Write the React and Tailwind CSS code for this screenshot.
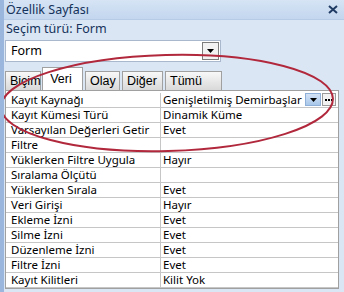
import React from "react";

const rows = [
  ["Kayıt Kaynağı", "Genişletilmiş Demirbaşlar"],
  ["Kayıt Kümesi Türü", "Dinamik Küme"],
  ["Varsayılan Değerleri Getir", "Evet"],
  ["Filtre", ""],
  ["Yüklerken Filtre Uygula", "Hayır"],
  ["Sıralama Ölçütü", ""],
  ["Yüklerken Sırala", "Evet"],
  ["Veri Girişi", "Hayır"],
  ["Ekleme İzni", "Evet"],
  ["Silme İzni", "Evet"],
  ["Düzenleme İzni", "Evet"],
  ["Filtre İzni", "Evet"],
  ["Kayıt Kilitleri", "Kilit Yok"],
];

const tabs = ["Biçim", "Veri", "Olay", "Diğer", "Tümü"];

const Arrow = () => (
  <svg width="7" height="4" viewBox="0 0 7 4">
    <path d="M0 0 H7 L3.5 4 Z" fill="#000" />
  </svg>
);

export default function App() {
  return (
    <div
      className="relative w-[344px] h-[292px] overflow-hidden bg-[#dbe6f4] border-l-4 border-[#9ab6dc] text-black"
      style={{ fontFamily: "'Noto Sans', sans-serif" }}
    >
      {/* title bar */}
      <div className="h-[20px] flex items-center justify-between pl-[2px] pr-[6px] bg-gradient-to-b from-[#d6e4f5] to-[#c3d6ee] border-b border-[#b5cbe6]">
        <span className="text-[12.5px] text-[#15325a] leading-[16px]">Özellik Sayfası</span>
        <svg width="10" height="9" viewBox="0 0 10 9">
          <path d="M1 1 L9 8 M9 1 L1 8" stroke="#1f3b63" strokeWidth="2" />
        </svg>
      </div>

      {/* selection type */}
      <div className="h-[18px] flex items-center pl-[2px] text-[12.5px] text-[#15325a]">
        Seçim türü: Form
      </div>

      {/* combobox */}
      <div className="ml-[1px] mt-[2px] w-[216px] h-[22px] bg-white border border-[#a9b8cc] flex items-center justify-between pl-[5px] pr-[1px]">
        <span className="text-[12.5px]">Form</span>
        <div className="w-[17px] h-[18px] border border-[#7d7d7d] bg-[#f2f2f2] flex items-center justify-center">
          <Arrow />
        </div>
      </div>

      {/* tabs */}
      <div
        className="mt-[5px] ml-[1px] h-[23px] flex items-end text-[12.5px]"
        style={{ fontFamily: "'Liberation Sans', Arial, sans-serif" }}
      >
        {tabs.map((t) => {
          const active = t === "Veri";
          const w = { Biçim: "w-[36px]", Veri: "w-[41px]", Olay: "w-[35px]", Diğer: "w-[41px]", Tümü: "w-[57px]" }[t];
          return active ? (
            <div
              key={t}
              className={`${w} -ml-[1px] mr-[2px] h-[23px] bg-white border border-b-0 border-[#a0a0a0] flex items-start justify-center pt-[2px] pr-[3px]`}
            >
              {t}
            </div>
          ) : (
            <div
              key={t}
              className={`${w} mr-[2px] h-[19px] bg-gradient-to-b from-[#f8f8f8] to-[#d9d9d9] border border-b-0 border-[#a0a0a0] flex items-center pl-[4px] leading-[16px]`}
            >
              {t}
            </div>
          );
        })}
      </div>

      {/* property grid */}
      <div className="ml-[1px] w-[334px] border border-[#a0a0a0] bg-white text-[11.5px]">
        <div className="h-[2px]" />
        {rows.map(([k, v], i) => (
          <div key={k} className="h-[15px] flex border-b border-[#c6c6c6] leading-[14px]">
            <div className="w-[155px] border-r border-[#c6c6c6] pl-[5px] whitespace-nowrap">
              {k}
            </div>
            <div className="flex-1 min-w-0 flex pl-[2px] whitespace-nowrap">
              <span className="flex-1 min-w-0">{v}</span>
              {i === 0 && (
                <div className="flex items-start gap-[1px] pr-[2px] shrink-0">
                  <div className="w-[16px] h-[13px] bg-gradient-to-b from-[#d4e3f6] to-[#a9c7ea] border border-[#8fb0d8] flex items-center justify-center">
                    <Arrow />
                  </div>
                  <div className="w-[14px] h-[13px] bg-[#f2f2f2] border border-[#9a9a9a] flex items-center justify-center">
                    <svg width="8" height="2" viewBox="0 0 8 2">
                      <rect x="0" y="0" width="2" height="2" fill="#000" />
                      <rect x="3" y="0" width="2" height="2" fill="#000" />
                      <rect x="6" y="0" width="2" height="2" fill="#000" />
                    </svg>
                  </div>
                </div>
              )}
            </div>
          </div>
        ))}
      </div>

      {/* annotation ellipse */}
      <svg className="absolute left-[-4px] top-0 pointer-events-none" width="344" height="292">
        <ellipse
          cx="167"
          cy="103"
          rx="166"
          ry="48"
          transform="rotate(-1.5 167 103)"
          fill="none"
          stroke="#b1283c"
          strokeWidth="2"
        />
      </svg>
    </div>
  );
}
